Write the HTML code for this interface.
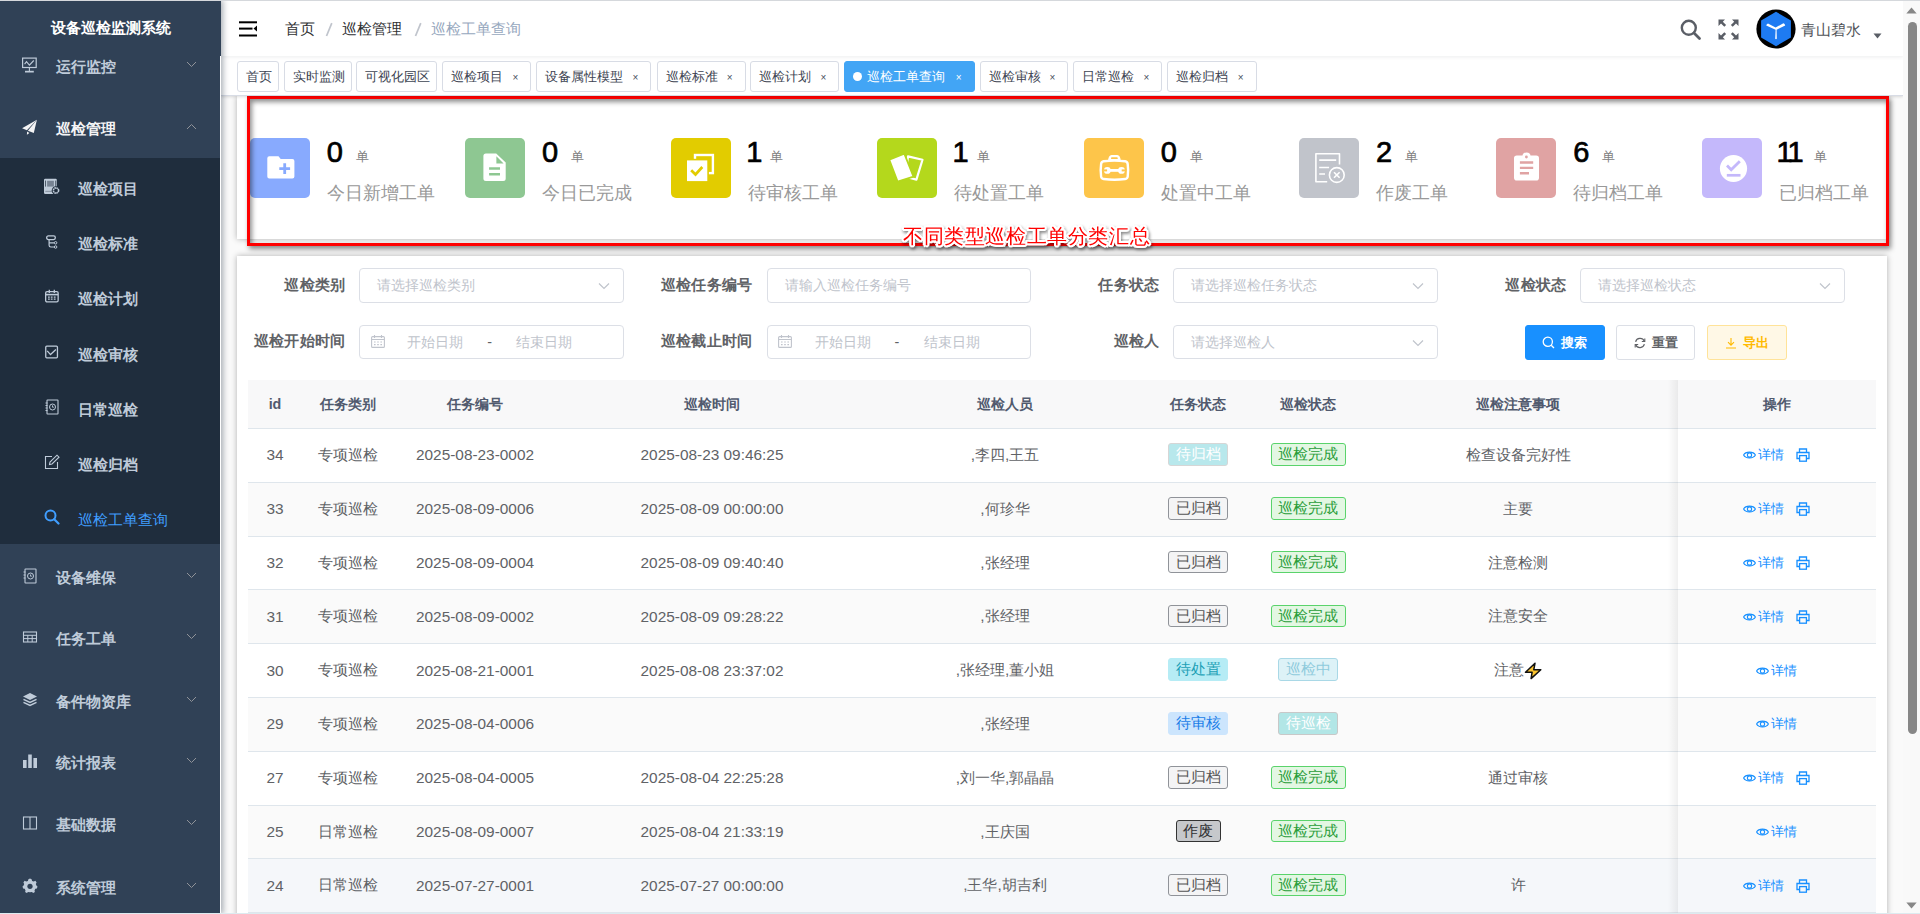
<!DOCTYPE html>
<html><head><meta charset="utf-8">
<style>
*{box-sizing:border-box;margin:0;padding:0}
html,body{width:1920px;height:914px;overflow:hidden;background:#fff;font-family:"Liberation Sans",sans-serif;color:#606266;font-weight:500}
.abs{position:absolute}
#topline{position:absolute;left:0;top:0;width:1920px;height:1px;background:#d5d8dc;z-index:50}
/* sidebar */
#side{position:absolute;left:0;top:0;width:221px;box-shadow:2px 0 6px rgba(0,21,41,.35);height:914px;background:#304156;overflow:hidden;z-index:10}
#side .title{position:absolute;left:0;top:14px;width:222px;text-align:center;color:#fff;font-weight:bold;font-size:15.4px;line-height:28px}
#side .sub{position:absolute;left:0;top:158px;width:221px;height:386px;background:#1f2d3d}
.mi{position:absolute;left:0;width:220px;height:20px;line-height:20px;font-size:15.4px;color:#bfcbd9;font-weight:600;white-space:nowrap}
.mi .t{position:absolute;left:56px;top:0}
.mi.s .t{left:78px}
.mi svg.ic{position:absolute;left:22px;top:0px}
.mi.s svg.ic{left:44px;top:-1px}
.mi .arr{position:absolute;left:186px;top:4px}
.mi.act{color:#409eff;font-weight:500}
.mi.open{color:#f4f4f5}
#sideline{position:absolute;left:220px;top:56px;width:1px;height:858px;background:#fff;z-index:11}
/* header */
#hdr{position:absolute;z-index:5;left:221px;top:1px;width:1682px;height:55px;background:#fff;box-shadow:0 1px 4px rgba(0,21,41,.08);z-index:5}
#tags{position:absolute;z-index:4;left:221px;top:56px;width:1682px;height:40px;background:#fff;border-bottom:1px solid #d8dce5;box-shadow:0 1px 3px 0 rgba(0,0,0,.12),0 0 3px 0 rgba(0,0,0,.04);z-index:4}
.tag{position:absolute;top:5px;height:31px;border:1px solid #d8dce5;border-radius:3px;font-size:13.2px;line-height:29px;color:#3d4452;background:#fff;padding-left:7.5px;white-space:nowrap}
.tag .x{position:absolute;right:12px;top:1px;font-size:10px;color:#495060}
.tag.on{background:#42a5f5;border-color:#42a5f5;color:#fff}
.tag.on .x{color:#fff}
.tag .dot{display:inline-block;width:9px;height:9px;border-radius:50%;background:#fff;margin-right:5px;vertical-align:0px}
.bc .sep{color:#c0c4cc;font-weight:bold;font-size:16px}
/* main */
#main{position:absolute;left:0;top:0;width:1903px;height:914px;overflow:hidden;z-index:1;background:#fafafa}
.card{position:absolute;background:#fff;box-shadow:0 0 6px rgba(0,0,0,.3)}

.strow{position:absolute;left:2.1px;top:0;width:1650px;height:143px;display:flex}
.st{flex:0 0 206.25px;display:flex;justify-content:center;align-items:center;padding-top:1px}
.sic{width:60px;height:60px;border-radius:5px;display:flex;align-items:center;justify-content:center;flex:none}
.stx{margin-left:17px;white-space:nowrap;position:relative;top:2px}
.sn{font-size:29px;line-height:34px;color:#000;-webkit-text-stroke:0.7px #000}
.su{font-size:13.2px;color:#808080;-webkit-text-stroke:0;font-weight:400;margin-left:13px;vertical-align:1px;}
.sl{font-size:17.6px;line-height:24px;color:#999;margin-top:7.5px}
#redbox{position:absolute;left:247px;top:96px;width:1642px;height:150px;border:3px solid #ff0000;box-shadow:2px 3px 5px rgba(0,0,0,.45), inset 2px 3px 5px rgba(0,0,0,.45);z-index:3}
#anno{position:absolute;left:903px;top:224px;font-size:19.6px;font-weight:500;letter-spacing:0.6px;line-height:24px;color:#f00;white-space:nowrap;z-index:4;text-shadow:1.20px 0.00px 0 #fff,1.04px 0.60px 0 #fff,0.60px 1.04px 0 #fff,0.00px 1.20px 0 #fff,-0.60px 1.04px 0 #fff,-1.04px 0.60px 0 #fff,-1.20px 0.00px 0 #fff,-1.04px -0.60px 0 #fff,-0.60px -1.04px 0 #fff,-0.00px -1.20px 0 #fff,0.60px -1.04px 0 #fff,1.04px -0.60px 0 #fff,2.40px 0.00px 0 #fff,2.08px 1.20px 0 #fff,1.20px 2.08px 0 #fff,0.00px 2.40px 0 #fff,-1.20px 2.08px 0 #fff,-2.08px 1.20px 0 #fff,-2.40px 0.00px 0 #fff,-2.08px -1.20px 0 #fff,-1.20px -2.08px 0 #fff,-0.00px -2.40px 0 #fff,1.20px -2.08px 0 #fff,2.08px -1.20px 0 #fff;filter:drop-shadow(1.5px 2px 1.5px rgba(0,0,0,.45))}

.flab{position:absolute;width:200px;text-align:right;font-size:15.4px;line-height:22px;font-weight:bold;color:#606266;white-space:nowrap;letter-spacing:0.15px;margin-top:-0.5px}
.inp{position:absolute;width:264.5px;height:34.5px;border:1px solid #dcdfe6;border-radius:4px;background:#fff}
.inp .ph{position:absolute;left:17px;top:6px;font-size:14.3px;line-height:21px;color:#c0c4cc;white-space:nowrap}
.inp .sarr{position:absolute;right:13px;top:13px}
.inp .cal{position:absolute;left:10.5px;top:9px}
.inp .dph{position:absolute;top:6px;font-size:14.3px;line-height:21px;color:#c0c4cc;white-space:nowrap}
.inp .dsep{position:absolute;left:127px;top:6px;font-size:14.3px;line-height:21px;color:#606266}
.btn{position:absolute;height:34.6px;border-radius:3px;font-size:13.2px;font-weight:700;display:flex;align-items:center;justify-content:center;gap:6px;white-space:nowrap}
.btn.pri{background:#1890ff;border:1px solid #1890ff;color:#fff}
.btn.def{background:#fff;border:1px solid #dcdfe6;color:#606266}
.btn.warn{background:#fff8e6;border:1px solid #ffe399;color:#ffba00}
#tbl{position:absolute;left:248px;top:0;width:1628px;height:914px}
.thead{position:absolute;left:0;width:1628px;background:#f8f8f9}
.trow{position:absolute;left:0;width:1628px}
.hline{position:absolute;left:0;width:1628px;height:1px;background:#dfe6ec}
.cell{position:absolute;top:0;height:100%;display:flex;align-items:center;justify-content:center;white-space:nowrap;font-size:15.4px;color:#606266}
.thead .cell{font-size:14.3px;font-weight:bold;color:#515a6e}
.tg{display:inline-block;position:relative;top:-1px;height:22.6px;line-height:20.6px;padding:0 6.5px;border:1px solid;border-radius:3px;font-size:15.4px}
.t-dgd{background:#b8e8ec;border-color:#d6d6d6;color:#fff}
.t-ok{background:#e3f7e3;border-color:#5ad36b;color:#2a9d3a}
.t-ygd{background:#f4f4f5;border-color:#909399;color:#555}
.t-dcz{background:#b6ecf5;border-color:#b6ecf5;color:#1c9fb5}
.t-xjz{background:#ddf2f7;border-color:#a9d8e6;color:#8fcbdc}
.t-dsh{background:#cce5fd;border-color:#cce5fd;color:#1a7de8}
.t-dxj{background:#b2e6e6;border-color:#c8c8c8;color:#fff}
.t-zf{background:#c6c8cb;border-color:#333;color:#303133}
.op{display:inline-flex;align-items:center;gap:2px;position:relative;left:-0.5px;font-size:13.2px;color:#1890ff}
.pr{display:inline-flex;margin-left:12px;position:relative;left:-1px}
.fixsh{position:absolute;left:1420px;width:10px;background:linear-gradient(to right,rgba(0,0,0,0),rgba(0,0,0,.06))}
/* scrollbar */
#vscroll{position:absolute;left:1903px;top:1px;width:17px;height:913px;background:#f9f9f9;z-index:60}
</style></head><body>
<div id="topline"></div>
<div style="position:absolute;left:0;top:913px;width:1920px;height:1px;background:#dcebf0;z-index:70"></div>
<div id="side">
  <div class="title">设备巡检监测系统</div>
  <div class="sub"></div>
  <div class="mi" style="top:57.4px"><svg class="ic" width="16" height="16" viewBox="0 0 16 16"><rect x="0.6" y="1.1" width="13.6" height="9.4" fill="none" stroke="currentColor" stroke-width="1.2"/><path d="M2.6 7.2 L4.5 4.7 L7.4 8.2 L11.8 3.5" fill="none" stroke="currentColor" stroke-width="1.1"/><path d="M7.4 11v3" stroke="currentColor" stroke-width="1.1"/><rect x="3" y="13.8" width="8.8" height="1.7" fill="currentColor"/></svg><span class="t">运行监控</span><svg class="arr" width="11" height="7" viewBox="0 0 11 7"><path d="M1 1 L5.5 5.5 L10 1" fill="none" stroke="#909399" stroke-width="1"/></svg></div>
  <div class="mi open" style="top:119.2px"><svg class="ic" width="16" height="16" viewBox="0 0 16 16"><path d="M14.9 0.8 L0.1 9.2 L4.9 11.2 Z" fill="#f4f4f5"/><path d="M14.9 0.8 L5.9 11.7 L11.8 14 Z" fill="#f4f4f5"/><path d="M5.1 12.6 L4.9 15.8 L7.4 14 Z" fill="#f4f4f5"/></svg><span class="t">巡检管理</span><svg class="arr" width="11" height="7" viewBox="0 0 11 7"><path d="M1 6 L5.5 1.5 L10 6" fill="none" stroke="#909399" stroke-width="1"/></svg></div>
  <div class="mi s" style="top:179.2px"><svg class="ic" width="16" height="16" viewBox="0 0 16 16"><rect x="0" y="0.8" width="12.8" height="15.1" rx="1.2" fill="currentColor"/><rect x="1" y="2.6" width="1" height="6" fill="#1f2d3d" opacity=".7"/><rect x="11.2" y="2.6" width="1" height="6" fill="#1f2d3d" opacity=".7"/><rect x="3.1" y="2.8" width="6.8" height="5.8" fill="#1f2d3d" opacity=".45"/><rect x="1.3" y="12.9" width="9" height="0.7" fill="#1f2d3d" opacity=".5"/><circle cx="12" cy="12.5" r="4.3" fill="#1f2d3d"/><circle cx="12" cy="12.5" r="2.6" fill="none" stroke="currentColor" stroke-width="1.6" stroke-dasharray="1.6 0.45"/><circle cx="12" cy="12.5" r="1.1" fill="#1f2d3d"/></svg><span class="t">巡检项目</span></div>
  <div class="mi s" style="top:234.3px"><svg class="ic" width="16" height="16" viewBox="0 0 16 16"><g transform="translate(0 0.7)"><rect x="2.65" y="2.25" width="8.7" height="3.6" rx="1.7" fill="none" stroke="currentColor" stroke-width="1.3"/><path d="M5.1 6 V11.6 Q5.1 13.3 6.8 13.3 H10.3 M5.1 9.1 H10.3" fill="none" stroke="currentColor" stroke-width="1.2"/><circle cx="11.6" cy="9.1" r="1.25" fill="none" stroke="currentColor" stroke-width="1"/><circle cx="11.6" cy="13.3" r="1.25" fill="none" stroke="currentColor" stroke-width="1"/></g></svg><span class="t">巡检标准</span></div>
  <div class="mi s" style="top:289.4px"><svg class="ic" width="16" height="16" viewBox="0 0 16 16"><rect x="1.65" y="3.55" width="12.5" height="10.4" rx="1.4" fill="none" stroke="currentColor" stroke-width="1.3"/><path d="M1.65 6.6h12.5" stroke="currentColor" stroke-width="1.6"/><path d="M5.3 1.8v3.1M10.3 1.8v3.1" stroke="currentColor" stroke-width="1.3"/><path d="M4 9.1h1.8M6.8 9.1h1.8M9.8 9.1h1.8M4 11.1h1.8M6.8 11.1h1.8M9.8 11.1h1.8" stroke="currentColor" stroke-width="1.2"/></svg><span class="t">巡检计划</span></div>
  <div class="mi s" style="top:344.5px"><svg class="ic" width="16" height="16" viewBox="0 0 16 16"><rect x="1.75" y="2.15" width="11.7" height="11.7" rx="1" fill="none" stroke="currentColor" stroke-width="1.3"/><path d="M3.2 6.9 L6.5 10.6 L11.9 5.6" fill="none" stroke="currentColor" stroke-width="1.3"/></svg><span class="t">巡检审核</span></div>
  <div class="mi s" style="top:399.6px"><svg class="ic" width="16" height="16" viewBox="0 0 16 16"><rect x="3" y="1" width="11" height="14" rx="0.5" fill="none" stroke="currentColor" stroke-width="1.1"/><path d="M1.5 4h2M1.5 6.5h2M1.5 9h2M1.5 11.5h2" stroke="currentColor" stroke-width="1"/><circle cx="8.5" cy="8" r="3" fill="none" stroke="currentColor" stroke-width="1"/><path d="M8.5 6.3v1.9h1.4" fill="none" stroke="currentColor" stroke-width="0.9"/></svg><span class="t">日常巡检</span></div>
  <div class="mi s" style="top:454.7px"><svg class="ic" width="16" height="16" viewBox="0 0 16 16"><path d="M8 2.5H1.5v12h12V8" fill="none" stroke="currentColor" stroke-width="1.1"/><path d="M5.5 10.5 L6 8 L13 1.2 L15 3.2 L8 10 Z" fill="none" stroke="currentColor" stroke-width="1.1"/></svg><span class="t">巡检归档</span></div>
  <div class="mi s act" style="top:509.8px"><svg class="ic" width="16" height="16" viewBox="0 0 16 16"><circle cx="6.5" cy="6.5" r="5" fill="none" stroke="#409eff" stroke-width="2"/><path d="M10.2 10.2 L14.5 14.5" stroke="#409eff" stroke-width="2.2" stroke-linecap="round"/></svg><span class="t">巡检工单查询</span></div>
  <div class="mi" style="top:567.6px"><svg class="ic" width="16" height="16" viewBox="0 0 16 16"><rect x="3" y="1" width="11" height="14" rx="0.5" fill="none" stroke="currentColor" stroke-width="1.1"/><path d="M1.5 4h2M1.5 7h2M1.5 10h2" stroke="currentColor" stroke-width="1"/><circle cx="8.5" cy="8" r="3" fill="none" stroke="currentColor" stroke-width="1"/><path d="M8.5 6.5v1.7h1.3" fill="none" stroke="currentColor" stroke-width="0.9"/></svg><span class="t">设备维保</span><svg class="arr" width="11" height="7" viewBox="0 0 11 7"><path d="M1 1 L5.5 5.5 L10 1" fill="none" stroke="#909399" stroke-width="1"/></svg></div>
  <div class="mi" style="top:629.3px"><svg class="ic" width="16" height="16" viewBox="0 0 16 16"><rect x="1.5" y="3" width="13" height="10" fill="none" stroke="currentColor" stroke-width="1.1"/><path d="M1.5 6.3h13M1.5 9.6h13M5.8 6.3v6.7M10.2 6.3v6.7" stroke="currentColor" stroke-width="1"/></svg><span class="t">任务工单</span><svg class="arr" width="11" height="7" viewBox="0 0 11 7"><path d="M1 1 L5.5 5.5 L10 1" fill="none" stroke="#909399" stroke-width="1"/></svg></div>
  <div class="mi" style="top:691.5px"><svg class="ic" width="16" height="16" viewBox="0 0 16 16"><path d="M8 1 L15 4.5 L8 8 L1 4.5Z" fill="currentColor"/><path d="M1.5 7.3 L8 10.5 L14.5 7.3" fill="none" stroke="currentColor" stroke-width="1.5"/><path d="M1.5 10.3 L8 13.5 L14.5 10.3" fill="none" stroke="currentColor" stroke-width="1.5"/></svg><span class="t">备件物资库</span><svg class="arr" width="11" height="7" viewBox="0 0 11 7"><path d="M1 1 L5.5 5.5 L10 1" fill="none" stroke="#909399" stroke-width="1"/></svg></div>
  <div class="mi" style="top:752.8px"><svg class="ic" width="16" height="16" viewBox="0 0 16 16"><rect x="1" y="7" width="3.6" height="8" fill="currentColor"/><rect x="6.2" y="1.5" width="3.6" height="13.5" fill="currentColor"/><rect x="11.4" y="5" width="3.6" height="10" fill="currentColor"/></svg><span class="t">统计报表</span><svg class="arr" width="11" height="7" viewBox="0 0 11 7"><path d="M1 1 L5.5 5.5 L10 1" fill="none" stroke="#909399" stroke-width="1"/></svg></div>
  <div class="mi" style="top:815.0px"><svg class="ic" width="16" height="16" viewBox="0 0 16 16"><rect x="1.5" y="2" width="13" height="12" fill="none" stroke="currentColor" stroke-width="1.1"/><path d="M8 2v12" stroke="currentColor" stroke-width="1.1"/></svg><span class="t">基础数据</span><svg class="arr" width="11" height="7" viewBox="0 0 11 7"><path d="M1 1 L5.5 5.5 L10 1" fill="none" stroke="#909399" stroke-width="1"/></svg></div>
  <div class="mi" style="top:877.5px"><svg class="ic" width="16" height="16" viewBox="0 0 16 16"><path d="M8 0.5 L9.6 1.2 L10.1 2.9 L11.8 3.5 L13.4 2.8 L14.6 4.4 L13.8 6 L14.4 7.6 L15.5 8.6 L14.9 10.4 L13.3 10.8 L12.5 12.4 L12.9 14.1 L11.2 15 L9.9 13.9 L8 14.3 L6.1 13.9 L4.8 15 L3.1 14.1 L3.5 12.4 L2.7 10.8 L1.1 10.4 L0.5 8.6 L1.6 7.6 L2.2 6 L1.4 4.4 L2.6 2.8 L4.2 3.5 L5.9 2.9 L6.4 1.2Z" fill="currentColor"/><circle cx="8" cy="8.3" r="2.6" fill="#304156"/></svg><span class="t">系统管理</span><svg class="arr" width="11" height="7" viewBox="0 0 11 7"><path d="M1 1 L5.5 5.5 L10 1" fill="none" stroke="#909399" stroke-width="1"/></svg></div>
</div>
<div id="sideline"></div>
<div id="hdr">
  <svg class="abs" style="left:18px;top:19px" width="19" height="17" viewBox="0 0 19 17"><rect x="0" y="1.3" width="18" height="2" fill="#000"/><rect x="0" y="7.6" width="13.5" height="2" fill="#000"/><rect x="0" y="14.5" width="18" height="2" fill="#000"/><path d="M18 5.6 L14.5 8.6 L18 11.6Z" fill="#000"/></svg>
  <div class="bc abs" style="left:0;top:17px;font-size:15.4px;line-height:22px;white-space:nowrap;color:#303133">
    <span class="abs" style="left:64px">首页</span><svg class="abs" style="left:104px;top:4px" width="8" height="15" viewBox="0 0 8 15"><path d="M1.5 14 L6.8 1.2" stroke="#c0c4cc" stroke-width="1.7"/></svg><span class="abs" style="left:121px">巡检管理</span><svg class="abs" style="left:192.5px;top:4px" width="8" height="15" viewBox="0 0 8 15"><path d="M1.5 14 L6.8 1.2" stroke="#c0c4cc" stroke-width="1.7"/></svg><span class="abs" style="left:210px;color:#97a8be">巡检工单查询</span></div>
  <svg class="abs" style="left:1459px;top:18px" width="22" height="22" viewBox="0 0 22 22"><circle cx="8.8" cy="8.8" r="7" fill="none" stroke="#5a5e66" stroke-width="2.4"/><path d="M14 14 L19.5 19.5" stroke="#5a5e66" stroke-width="2.8" stroke-linecap="round"/></svg>
  <svg class="abs" style="left:1497px;top:18px" width="21" height="21" viewBox="0 0 21 21"><g fill="#5a5e66"><path d="M0.5 0.5h6.5l-2.2 2.2 3.3 3.3-1.8 1.8-3.3-3.3-2.5 2.5z"/><path d="M20.5 0.5h-6.5l2.2 2.2-3.3 3.3 1.8 1.8 3.3-3.3 2.5 2.5z"/><path d="M0.5 20.5h6.5l-2.2-2.2 3.3-3.3-1.8-1.8-3.3 3.3-2.5-2.5z"/><path d="M20.5 20.5h-6.5l2.2-2.2-3.3-3.3 1.8-1.8 3.3 3.3 2.5-2.5z"/></g></svg>
  <svg class="abs" style="left:1535px;top:8px" width="40" height="40" viewBox="0 0 40 40"><circle cx="20" cy="20" r="19.6" fill="#000"/><polygon points="20.00,2.80 34.90,11.40 34.90,28.60 20.00,37.20 5.10,28.60 5.10,11.40" fill="#1e7bf2"/><path d="M19.6 20.8 L10.2 16.6 Q10.6 14.6 12 14.4 L19.6 18.6 L27.4 14.2 Q28.9 14.5 29.2 16.4 L20.6 20.8 L20.8 29.8 Q20 30.6 19.2 29.8Z" fill="#fff"/></svg>
  <div class="abs" style="left:1580px;top:18px;font-size:15.4px;line-height:22px;color:#505358;white-space:nowrap">青山碧水</div>
  <svg class="abs" style="left:1652px;top:32px" width="9" height="6" viewBox="0 0 9 6"><path d="M0.5 0.5h8L4.5 5.5z" fill="#5a5e66"/></svg>
</div>
<div id="tags">
  <div class="tag" style="left:16.3px;width:41.4px">首页</div>
  <div class="tag" style="left:63.2px;width:67.4px">实时监测</div>
  <div class="tag" style="left:135.2px;width:81.2px">可视化园区</div>
  <div class="tag" style="left:221.2px;width:89.2px">巡检项目<span class="x">×</span></div>
  <div class="tag" style="left:315.2px;width:115.2px">设备属性模型<span class="x">×</span></div>
  <div class="tag" style="left:436.3px;width:88.4px">巡检标准<span class="x">×</span></div>
  <div class="tag" style="left:529.3px;width:89.0px">巡检计划<span class="x">×</span></div>
  <div class="tag on" style="left:623.0px;width:130.7px"><span class="dot"></span>巡检工单查询<span class="x">×</span></div>
  <div class="tag" style="left:759.0px;width:88.3px">巡检审核<span class="x">×</span></div>
  <div class="tag" style="left:852.3px;width:89.0px">日常巡检<span class="x">×</span></div>
  <div class="tag" style="left:946.3px;width:89.4px">巡检归档<span class="x">×</span></div>
</div>
<div id="main">
<div class="card" id="stcard" style="left:237px;top:96px;width:1650px;height:143px"><div class="strow"><div class="st"><div class="sic" style="background:#88aafe"><svg width="60" height="60" viewBox="0 0 60 60"><path d="M17.3 20.2 a2 2 0 0 1 2-2 h9.2 l2.2 2.8 h11.7 a2 2 0 0 1 2 2 v15.4 a2 2 0 0 1 -2 2 h-23.1 a2 2 0 0 1 -2-2z" fill="#fff"/><path d="M34.7 25.3v10.8M29.3 30.7h10.8" stroke="#88aafe" stroke-width="2.8"/></svg></div><div class="stx"><div class="sn">0<span class="su">单</span></div><div class="sl">今日新增工单</div></div></div><div class="st"><div class="sic" style="background:#8ec792"><svg width="60" height="60" viewBox="0 0 60 60"><path d="M18.4 18.1 a2.5 2.5 0 0 1 2.5-2.5 h10.3 l9.5 8.8 v16.2 a2.5 2.5 0 0 1 -2.5 2.5 h-17.3 a2.5 2.5 0 0 1 -2.5-2.5z" fill="#fff"/><path d="M31.4 18.2 V25.5 H38.6Z" fill="#8ec792"/><path d="M24.1 30.5h10.9M24.1 36.3h10.9" stroke="#8ec792" stroke-width="2.6"/></svg></div><div class="stx"><div class="sn">0<span class="su">单</span></div><div class="sl">今日已完成</div></div></div><div class="st"><div class="sic" style="background:#e2cc00"><svg width="60" height="60" viewBox="0 0 60 60"><rect x="24" y="17" width="17.9" height="18.1" fill="none" stroke="#fff" stroke-width="2.4"/><rect x="15.2" y="21.6" width="21.9" height="22.3" fill="#fff" stroke="#e2cc00" stroke-width="1.6"/><path d="M20.2 32.2 L24.5 36.5 L31.3 29" fill="none" stroke="#e2cc00" stroke-width="2.7"/></svg></div><div class="stx"><div class="sn"><span style="margin-left:-2px">1</span><span class="su" style="margin-left:8px">单</span></div><div class="sl">待审核工单</div></div></div><div class="st"><div class="sic" style="background:#b4d81c"><svg width="60" height="60" viewBox="0 0 60 60"><path d="M31 18.4 L45.5 21.8 L39.4 41.6 L28.5 38.8Z" fill="none" stroke="#fff" stroke-width="2.2" stroke-linejoin="round"/><path d="M12.3 21.7 L27.3 15.6 L36.5 38.6 L20.6 43.6Z" fill="#fff" stroke="#b4d81c" stroke-width="1.8" stroke-linejoin="round"/></svg></div><div class="stx"><div class="sn"><span style="margin-left:-2px">1</span><span class="su" style="margin-left:8px">单</span></div><div class="sl">待处置工单</div></div></div><div class="st"><div class="sic" style="background:#fdc54a"><svg width="60" height="60" viewBox="0 0 60 60"><path d="M19.6 23.3 Q30.4 21.9 41.2 23.3 Q43.4 23.6 43.7 26 Q44.6 32.2 43.7 38.6 Q43.4 40.7 41.2 41 Q30.4 42.6 19.6 41 Q17.4 40.7 17.1 38.6 Q16.2 32.2 17.1 26 Q17.4 23.6 19.6 23.3Z" fill="none" stroke="#fff" stroke-width="2.4"/><path d="M24 22.6 Q24.6 17.2 27.5 17 H33.3 Q36.2 17.2 36.8 22.6Z" fill="#fff"/><rect x="27" y="19.3" width="6.8" height="1.8" rx="0.9" fill="#fdc54a"/><path d="M24 32.4h12.8" stroke="#fff" stroke-width="2.8"/><circle cx="23.3" cy="32.4" r="3.4" fill="#fff"/><circle cx="37.5" cy="32.4" r="3.4" fill="#fff"/><rect x="19.5" y="31.4" width="3.6" height="2" fill="#fdc54a"/><rect x="37.7" y="31.4" width="3.6" height="2" fill="#fdc54a"/></svg></div><div class="stx"><div class="sn">0<span class="su">单</span></div><div class="sl">处置中工单</div></div></div><div class="st"><div class="sic" style="background:#c1c4cb"><svg width="60" height="60" viewBox="0 0 60 60"><path d="M28.2 43.8H16.9V15.8h23.6v10.7" fill="none" stroke="#fff" stroke-width="1.6" stroke-linejoin="round"/><path d="M20.2 22.1h17M20.2 29.5h9.9M20.2 36h5.8" stroke="#fff" stroke-width="1.6"/><circle cx="37.8" cy="37" r="7.4" fill="none" stroke="#fff" stroke-width="1.6"/><path d="M35 34.2l5.6 5.6M40.6 34.2l-5.6 5.6" stroke="#fff" stroke-width="1.6"/></svg></div><div class="stx"><div class="sn">2<span class="su">单</span></div><div class="sl">作废工单</div></div></div><div class="st"><div class="sic" style="background:#e0a3a3"><svg width="60" height="60" viewBox="0 0 60 60"><rect x="18" y="17.5" width="25" height="25" rx="2.8" fill="#fff"/><path d="M26.5 18 A4 3.6 0 0 1 34.5 18Z" fill="#fff"/><circle cx="30.4" cy="19" r="1.4" fill="#e0a3a3"/><path d="M23.9 24.5h13.3M23.9 29.9h13.3M23.9 35.3h9.1" stroke="#e0a3a3" stroke-width="2.4"/></svg></div><div class="stx"><div class="sn">6<span class="su">单</span></div><div class="sl">待归档工单</div></div></div><div class="st"><div class="sic" style="background:#c4b8fb"><svg width="60" height="60" viewBox="0 0 60 60"><circle cx="31.5" cy="30.5" r="13.6" fill="#fff"/><path d="M25 27.6 L29.2 31.8 L37.8 23.2" fill="none" stroke="#c4b8fb" stroke-width="2.8"/><path d="M24.8 37.3h13.7" stroke="#c4b8fb" stroke-width="2.7"/></svg></div><div class="stx"><div class="sn"><span style="letter-spacing:-3px;margin-left:-3px">11</span><span class="su">单</span></div><div class="sl">已归档工单</div></div></div></div></div>
<div class="card" id="sccard" style="left:237px;top:256px;width:1650px;height:700px"></div>
<div class="flab" style="left:145px;top:274.5px">巡检类别</div>
<div class="inp" style="left:359.3px;top:268px"><span class="ph">请选择巡检类别</span><svg class="sarr" width="12" height="8" viewBox="0 0 12 8"><path d="M1 1.5 L6 6.5 L11 1.5" fill="none" stroke="#c0c4cc" stroke-width="1.2"/></svg></div>
<div class="flab" style="left:552px;top:274.5px">巡检任务编号</div>
<div class="inp" style="left:766.5px;top:268px"><span class="ph">请输入巡检任务编号</span></div>
<div class="flab" style="left:959px;top:274.5px">任务状态</div>
<div class="inp" style="left:1173px;top:268px"><span class="ph">请选择巡检任务状态</span><svg class="sarr" width="12" height="8" viewBox="0 0 12 8"><path d="M1 1.5 L6 6.5 L11 1.5" fill="none" stroke="#c0c4cc" stroke-width="1.2"/></svg></div>
<div class="flab" style="left:1366px;top:274.5px">巡检状态</div>
<div class="inp" style="left:1580.3px;top:268px"><span class="ph">请选择巡检状态</span><svg class="sarr" width="12" height="8" viewBox="0 0 12 8"><path d="M1 1.5 L6 6.5 L11 1.5" fill="none" stroke="#c0c4cc" stroke-width="1.2"/></svg></div>
<div class="flab" style="left:145px;top:330.5px">巡检开始时间</div>
<div class="inp" style="left:359.3px;top:324.5px"><svg class="cal" width="14" height="13" viewBox="0 0 14 13"><rect x="0.6" y="1.6" width="12.8" height="10.8" rx="1" fill="none" stroke="#c0c4cc" stroke-width="1.1"/><path d="M0.6 4.5h12.8M3.5 0v3M10.5 0v3" stroke="#c0c4cc" stroke-width="1.1"/><path d="M3 7h1.6M6.2 7h1.6M9.4 7h1.6M3 9.6h1.6M6.2 9.6h1.6M9.4 9.6h1.6" stroke="#c0c4cc" stroke-width="1.1"/></svg><span class="dph" style="left:47px">开始日期</span><span class="dsep">-</span><span class="dph" style="left:156px">结束日期</span></div>
<div class="flab" style="left:552px;top:330.5px">巡检截止时间</div>
<div class="inp" style="left:766.5px;top:324.5px"><svg class="cal" width="14" height="13" viewBox="0 0 14 13"><rect x="0.6" y="1.6" width="12.8" height="10.8" rx="1" fill="none" stroke="#c0c4cc" stroke-width="1.1"/><path d="M0.6 4.5h12.8M3.5 0v3M10.5 0v3" stroke="#c0c4cc" stroke-width="1.1"/><path d="M3 7h1.6M6.2 7h1.6M9.4 7h1.6M3 9.6h1.6M6.2 9.6h1.6M9.4 9.6h1.6" stroke="#c0c4cc" stroke-width="1.1"/></svg><span class="dph" style="left:47px">开始日期</span><span class="dsep">-</span><span class="dph" style="left:156px">结束日期</span></div>
<div class="flab" style="left:959px;top:330.5px">巡检人</div>
<div class="inp" style="left:1173px;top:324.5px"><span class="ph">请选择巡检人</span><svg class="sarr" width="12" height="8" viewBox="0 0 12 8"><path d="M1 1.5 L6 6.5 L11 1.5" fill="none" stroke="#c0c4cc" stroke-width="1.2"/></svg></div>
<div class="btn pri" style="left:1525px;top:325.3px;width:79.7px"><svg width="13" height="13" viewBox="0 0 13 13"><circle cx="5.8" cy="5.8" r="4.6" fill="none" stroke="#fff" stroke-width="1.3"/><path d="M9.2 9.2 L12 12" stroke="#fff" stroke-width="1.3"/></svg><span>搜索</span></div>
<div class="btn def" style="left:1616.2px;top:325.3px;width:79.2px"><svg width="12" height="12" viewBox="0 0 12 12"><path d="M10.3 4.2 A4.6 4.6 0 0 0 1.6 4.8" fill="none" stroke="#606266" stroke-width="1.2"/><path d="M1.7 7.8 A4.6 4.6 0 0 0 10.4 7.2" fill="none" stroke="#606266" stroke-width="1.2"/><path d="M10.8 1.5v3h-3" fill="none" stroke="#606266" stroke-width="1.1"/><path d="M1.2 10.5v-3h3" fill="none" stroke="#606266" stroke-width="1.1"/></svg><span>重置</span></div>
<div class="btn warn" style="left:1707.4px;top:325.3px;width:80.1px"><svg width="12" height="12" viewBox="0 0 12 12"><path d="M6 1v7M3 5.2 L6 8.2 L9 5.2M1 11h10" fill="none" stroke="#ffba00" stroke-width="1.1"/></svg><span>导出</span></div>
<div id="tbl"><div class="thead" style="top:380px;height:48px">
<div class="cell" style="left:0px;width:54px">id</div>
<div class="cell" style="left:54px;width:92px">任务类别</div>
<div class="cell" style="left:146px;width:162px">任务编号</div>
<div class="cell" style="left:308px;width:312px">巡检时间</div>
<div class="cell" style="left:620px;width:274px">巡检人员</div>
<div class="cell" style="left:894px;width:112px">任务状态</div>
<div class="cell" style="left:1006px;width:108px">巡检状态</div>
<div class="cell" style="left:1114px;width:312px">巡检注意事项</div>
<div class="cell" style="left:1430px;width:198px">操作</div>
</div><div class="hline" style="top:428px"></div>
<div class="trow" style="top:429.10px;height:52.79px;background:#fff">
<div class="cell" style="left:0px;width:54px">34</div>
<div class="cell" style="left:54px;width:92px">专项巡检</div>
<div class="cell" style="left:146px;width:162px">2025-08-23-0002</div>
<div class="cell" style="left:308px;width:312px">2025-08-23 09:46:25</div>
<div class="cell" style="left:620px;width:274px">,李四,王五</div>
<div class="cell" style="left:894px;width:112px"><span class="tg t-dgd">待归档</span></div>
<div class="cell" style="left:1006px;width:108px"><span class="tg t-ok">巡检完成</span></div>
<div class="cell" style="left:1114px;width:312px">检查设备完好性</div>
<div class="cell" style="left:1430px;width:198px"><span class="op"><svg width="13" height="10" viewBox="0 0 13 10"><path d="M0.6 5 C2.5 1.2 10.5 1.2 12.4 5 C10.5 8.8 2.5 8.8 0.6 5Z" fill="none" stroke="#1890ff" stroke-width="1.1"/><circle cx="6.5" cy="5" r="2.1" fill="none" stroke="#1890ff" stroke-width="1.1"/></svg><span>详情</span></span><span class="pr"><svg width="14" height="14" viewBox="0 0 14 14"><path d="M3.5 4V1h7v3" fill="none" stroke="#1890ff" stroke-width="1.3"/><path d="M3 10.5H1V4.5h12v6h-2" fill="none" stroke="#1890ff" stroke-width="1.3"/><rect x="3.6" y="7.6" width="6.8" height="5.6" fill="none" stroke="#1890ff" stroke-width="1.3"/></svg></span></div>
</div>
<div class="hline" style="top:481.89px"></div>
<div class="trow" style="top:482.89px;height:52.79px;background:#fafafa">
<div class="cell" style="left:0px;width:54px">33</div>
<div class="cell" style="left:54px;width:92px">专项巡检</div>
<div class="cell" style="left:146px;width:162px">2025-08-09-0006</div>
<div class="cell" style="left:308px;width:312px">2025-08-09 00:00:00</div>
<div class="cell" style="left:620px;width:274px">,何珍华</div>
<div class="cell" style="left:894px;width:112px"><span class="tg t-ygd">已归档</span></div>
<div class="cell" style="left:1006px;width:108px"><span class="tg t-ok">巡检完成</span></div>
<div class="cell" style="left:1114px;width:312px">主要</div>
<div class="cell" style="left:1430px;width:198px"><span class="op"><svg width="13" height="10" viewBox="0 0 13 10"><path d="M0.6 5 C2.5 1.2 10.5 1.2 12.4 5 C10.5 8.8 2.5 8.8 0.6 5Z" fill="none" stroke="#1890ff" stroke-width="1.1"/><circle cx="6.5" cy="5" r="2.1" fill="none" stroke="#1890ff" stroke-width="1.1"/></svg><span>详情</span></span><span class="pr"><svg width="14" height="14" viewBox="0 0 14 14"><path d="M3.5 4V1h7v3" fill="none" stroke="#1890ff" stroke-width="1.3"/><path d="M3 10.5H1V4.5h12v6h-2" fill="none" stroke="#1890ff" stroke-width="1.3"/><rect x="3.6" y="7.6" width="6.8" height="5.6" fill="none" stroke="#1890ff" stroke-width="1.3"/></svg></span></div>
</div>
<div class="hline" style="top:535.68px"></div>
<div class="trow" style="top:536.68px;height:52.79px;background:#fff">
<div class="cell" style="left:0px;width:54px">32</div>
<div class="cell" style="left:54px;width:92px">专项巡检</div>
<div class="cell" style="left:146px;width:162px">2025-08-09-0004</div>
<div class="cell" style="left:308px;width:312px">2025-08-09 09:40:40</div>
<div class="cell" style="left:620px;width:274px">,张经理</div>
<div class="cell" style="left:894px;width:112px"><span class="tg t-ygd">已归档</span></div>
<div class="cell" style="left:1006px;width:108px"><span class="tg t-ok">巡检完成</span></div>
<div class="cell" style="left:1114px;width:312px">注意检测</div>
<div class="cell" style="left:1430px;width:198px"><span class="op"><svg width="13" height="10" viewBox="0 0 13 10"><path d="M0.6 5 C2.5 1.2 10.5 1.2 12.4 5 C10.5 8.8 2.5 8.8 0.6 5Z" fill="none" stroke="#1890ff" stroke-width="1.1"/><circle cx="6.5" cy="5" r="2.1" fill="none" stroke="#1890ff" stroke-width="1.1"/></svg><span>详情</span></span><span class="pr"><svg width="14" height="14" viewBox="0 0 14 14"><path d="M3.5 4V1h7v3" fill="none" stroke="#1890ff" stroke-width="1.3"/><path d="M3 10.5H1V4.5h12v6h-2" fill="none" stroke="#1890ff" stroke-width="1.3"/><rect x="3.6" y="7.6" width="6.8" height="5.6" fill="none" stroke="#1890ff" stroke-width="1.3"/></svg></span></div>
</div>
<div class="hline" style="top:589.47px"></div>
<div class="trow" style="top:590.47px;height:52.79px;background:#fafafa">
<div class="cell" style="left:0px;width:54px">31</div>
<div class="cell" style="left:54px;width:92px">专项巡检</div>
<div class="cell" style="left:146px;width:162px">2025-08-09-0002</div>
<div class="cell" style="left:308px;width:312px">2025-08-09 09:28:22</div>
<div class="cell" style="left:620px;width:274px">,张经理</div>
<div class="cell" style="left:894px;width:112px"><span class="tg t-ygd">已归档</span></div>
<div class="cell" style="left:1006px;width:108px"><span class="tg t-ok">巡检完成</span></div>
<div class="cell" style="left:1114px;width:312px">注意安全</div>
<div class="cell" style="left:1430px;width:198px"><span class="op"><svg width="13" height="10" viewBox="0 0 13 10"><path d="M0.6 5 C2.5 1.2 10.5 1.2 12.4 5 C10.5 8.8 2.5 8.8 0.6 5Z" fill="none" stroke="#1890ff" stroke-width="1.1"/><circle cx="6.5" cy="5" r="2.1" fill="none" stroke="#1890ff" stroke-width="1.1"/></svg><span>详情</span></span><span class="pr"><svg width="14" height="14" viewBox="0 0 14 14"><path d="M3.5 4V1h7v3" fill="none" stroke="#1890ff" stroke-width="1.3"/><path d="M3 10.5H1V4.5h12v6h-2" fill="none" stroke="#1890ff" stroke-width="1.3"/><rect x="3.6" y="7.6" width="6.8" height="5.6" fill="none" stroke="#1890ff" stroke-width="1.3"/></svg></span></div>
</div>
<div class="hline" style="top:643.26px"></div>
<div class="trow" style="top:644.26px;height:52.79px;background:#fff">
<div class="cell" style="left:0px;width:54px">30</div>
<div class="cell" style="left:54px;width:92px">专项巡检</div>
<div class="cell" style="left:146px;width:162px">2025-08-21-0001</div>
<div class="cell" style="left:308px;width:312px">2025-08-08 23:37:02</div>
<div class="cell" style="left:620px;width:274px">,张经理,董小姐</div>
<div class="cell" style="left:894px;width:112px"><span class="tg t-dcz">待处置</span></div>
<div class="cell" style="left:1006px;width:108px"><span class="tg t-xjz">巡检中</span></div>
<div class="cell" style="left:1114px;width:312px">注意<svg width="18" height="18" viewBox="0 0 18 18" style="vertical-align:-3px"><path d="M11 1.2 L1.5 10.2 H8.1 L7.1 16.6 L16.8 7.7 H9.8 Z" fill="#fcc52e" stroke="#111" stroke-width="1.5" stroke-linejoin="round"/></svg></div>
<div class="cell" style="left:1430px;width:198px"><span class="op"><svg width="13" height="10" viewBox="0 0 13 10"><path d="M0.6 5 C2.5 1.2 10.5 1.2 12.4 5 C10.5 8.8 2.5 8.8 0.6 5Z" fill="none" stroke="#1890ff" stroke-width="1.1"/><circle cx="6.5" cy="5" r="2.1" fill="none" stroke="#1890ff" stroke-width="1.1"/></svg><span>详情</span></span></div>
</div>
<div class="hline" style="top:697.05px"></div>
<div class="trow" style="top:698.05px;height:52.79px;background:#fafafa">
<div class="cell" style="left:0px;width:54px">29</div>
<div class="cell" style="left:54px;width:92px">专项巡检</div>
<div class="cell" style="left:146px;width:162px">2025-08-04-0006</div>
<div class="cell" style="left:308px;width:312px"></div>
<div class="cell" style="left:620px;width:274px">,张经理</div>
<div class="cell" style="left:894px;width:112px"><span class="tg t-dsh">待审核</span></div>
<div class="cell" style="left:1006px;width:108px"><span class="tg t-dxj">待巡检</span></div>
<div class="cell" style="left:1114px;width:312px"></div>
<div class="cell" style="left:1430px;width:198px"><span class="op"><svg width="13" height="10" viewBox="0 0 13 10"><path d="M0.6 5 C2.5 1.2 10.5 1.2 12.4 5 C10.5 8.8 2.5 8.8 0.6 5Z" fill="none" stroke="#1890ff" stroke-width="1.1"/><circle cx="6.5" cy="5" r="2.1" fill="none" stroke="#1890ff" stroke-width="1.1"/></svg><span>详情</span></span></div>
</div>
<div class="hline" style="top:750.84px"></div>
<div class="trow" style="top:751.84px;height:52.79px;background:#fff">
<div class="cell" style="left:0px;width:54px">27</div>
<div class="cell" style="left:54px;width:92px">专项巡检</div>
<div class="cell" style="left:146px;width:162px">2025-08-04-0005</div>
<div class="cell" style="left:308px;width:312px">2025-08-04 22:25:28</div>
<div class="cell" style="left:620px;width:274px">,刘一华,郭晶晶</div>
<div class="cell" style="left:894px;width:112px"><span class="tg t-ygd">已归档</span></div>
<div class="cell" style="left:1006px;width:108px"><span class="tg t-ok">巡检完成</span></div>
<div class="cell" style="left:1114px;width:312px">通过审核</div>
<div class="cell" style="left:1430px;width:198px"><span class="op"><svg width="13" height="10" viewBox="0 0 13 10"><path d="M0.6 5 C2.5 1.2 10.5 1.2 12.4 5 C10.5 8.8 2.5 8.8 0.6 5Z" fill="none" stroke="#1890ff" stroke-width="1.1"/><circle cx="6.5" cy="5" r="2.1" fill="none" stroke="#1890ff" stroke-width="1.1"/></svg><span>详情</span></span><span class="pr"><svg width="14" height="14" viewBox="0 0 14 14"><path d="M3.5 4V1h7v3" fill="none" stroke="#1890ff" stroke-width="1.3"/><path d="M3 10.5H1V4.5h12v6h-2" fill="none" stroke="#1890ff" stroke-width="1.3"/><rect x="3.6" y="7.6" width="6.8" height="5.6" fill="none" stroke="#1890ff" stroke-width="1.3"/></svg></span></div>
</div>
<div class="hline" style="top:804.63px"></div>
<div class="trow" style="top:805.63px;height:52.79px;background:#fafafa">
<div class="cell" style="left:0px;width:54px">25</div>
<div class="cell" style="left:54px;width:92px">日常巡检</div>
<div class="cell" style="left:146px;width:162px">2025-08-09-0007</div>
<div class="cell" style="left:308px;width:312px">2025-08-04 21:33:19</div>
<div class="cell" style="left:620px;width:274px">,王庆国</div>
<div class="cell" style="left:894px;width:112px"><span class="tg t-zf">作废</span></div>
<div class="cell" style="left:1006px;width:108px"><span class="tg t-ok">巡检完成</span></div>
<div class="cell" style="left:1114px;width:312px"></div>
<div class="cell" style="left:1430px;width:198px"><span class="op"><svg width="13" height="10" viewBox="0 0 13 10"><path d="M0.6 5 C2.5 1.2 10.5 1.2 12.4 5 C10.5 8.8 2.5 8.8 0.6 5Z" fill="none" stroke="#1890ff" stroke-width="1.1"/><circle cx="6.5" cy="5" r="2.1" fill="none" stroke="#1890ff" stroke-width="1.1"/></svg><span>详情</span></span></div>
</div>
<div class="hline" style="top:858.42px"></div>
<div class="trow" style="top:859.42px;height:52.79px;background:#f5f7fa">
<div class="cell" style="left:0px;width:54px">24</div>
<div class="cell" style="left:54px;width:92px">日常巡检</div>
<div class="cell" style="left:146px;width:162px">2025-07-27-0001</div>
<div class="cell" style="left:308px;width:312px">2025-07-27 00:00:00</div>
<div class="cell" style="left:620px;width:274px">,王华,胡吉利</div>
<div class="cell" style="left:894px;width:112px"><span class="tg t-ygd">已归档</span></div>
<div class="cell" style="left:1006px;width:108px"><span class="tg t-ok">巡检完成</span></div>
<div class="cell" style="left:1114px;width:312px">许</div>
<div class="cell" style="left:1430px;width:198px"><span class="op"><svg width="13" height="10" viewBox="0 0 13 10"><path d="M0.6 5 C2.5 1.2 10.5 1.2 12.4 5 C10.5 8.8 2.5 8.8 0.6 5Z" fill="none" stroke="#1890ff" stroke-width="1.1"/><circle cx="6.5" cy="5" r="2.1" fill="none" stroke="#1890ff" stroke-width="1.1"/></svg><span>详情</span></span><span class="pr"><svg width="14" height="14" viewBox="0 0 14 14"><path d="M3.5 4V1h7v3" fill="none" stroke="#1890ff" stroke-width="1.3"/><path d="M3 10.5H1V4.5h12v6h-2" fill="none" stroke="#1890ff" stroke-width="1.3"/><rect x="3.6" y="7.6" width="6.8" height="5.6" fill="none" stroke="#1890ff" stroke-width="1.3"/></svg></span></div>
</div>
<div class="hline" style="top:912.21px"></div>
<div class="fixsh" style="top:380px;height:540px"></div></div>
<div id="redbox"></div><div id="anno">不同类型巡检工单分类汇总</div>
</div>
<div id="vscroll">
  <svg class="abs" style="left:3px;top:6px" width="11" height="7" viewBox="0 0 11 7"><path d="M5.5 0.5 L10.7 6.5 L0.3 6.5Z" fill="#878787"/></svg>
  <div class="abs" style="left:5px;top:21px;width:8.5px;height:712px;background:#878787;border-radius:4.5px"></div>
  <svg class="abs" style="left:3px;top:901px" width="11" height="7" viewBox="0 0 11 7"><path d="M5.5 6.5 L10.7 0.5 L0.3 0.5Z" fill="#878787"/></svg>
</div>
</body></html>
